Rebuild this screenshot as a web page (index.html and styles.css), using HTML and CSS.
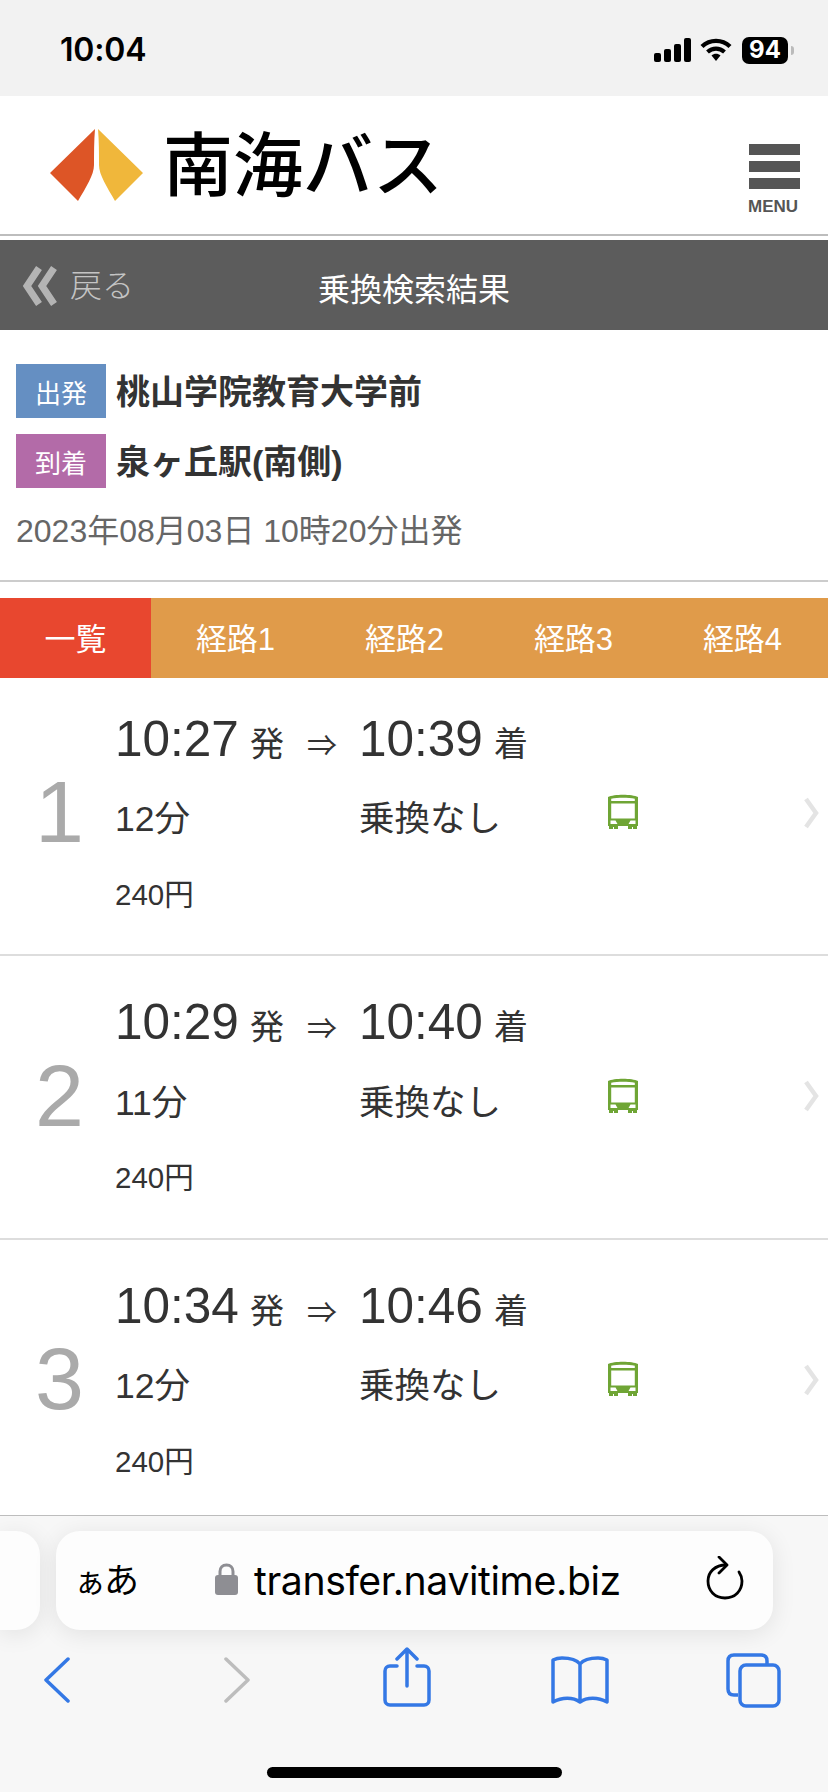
FILE: index.html
```html
<!DOCTYPE html>
<html lang="ja">
<head>
<meta charset="utf-8">
<title>乗換検索結果</title>
<link rel="stylesheet" href="styles.css">
</head>
<body>
<div class="screen">
  <div class="status">
    <span class="clock">10:04</span>
    <div class="status-icons">
      <svg class="signal" width="38" height="24" viewBox="0 0 38 24"><rect x="0" y="15" width="7" height="9" rx="2"/><rect x="10" y="11" width="7" height="13" rx="2"/><rect x="20" y="6" width="7" height="18" rx="2"/><rect x="30" y="0" width="7" height="24" rx="2"/></svg>
      <svg class="wifi" width="32" height="24" viewBox="0 0 32 24"><path d="M2 8.500C10 1 22 1 30 8.500" fill="none" stroke="#000" stroke-width="4.400"/><path d="M7.500 14C12.500 9.600 19.500 9.600 24.500 14" fill="none" stroke="#000" stroke-width="4.200"/><path d="M11.500 17.500C14 15.300 18 15.300 20.500 17.500L16 23Z"/></svg>
      <div class="battery"><span class="battery-num">94</span></div>
      <span class="battery-nub"></span>
    </div>
  </div>

  <header class="site-head">
    <div class="logo">
      <svg class="logo-mark" width="93" height="72" viewBox="0 0 93 72"><path d="M45 0L0 44L28 72C36 58 44 46 44 36C44 24 44 12 45 0Z" fill="#dd5526"/><path d="M48 0L93 44L65 72C57 58 49 46 49 36C49 24 49 12 48 0Z" fill="#f0b73b"/></svg>
      <span class="logo-text">南海バス</span>
    </div>
    <div class="menu">
      <span class="menu-bar"></span><span class="menu-bar"></span><span class="menu-bar"></span>
      <span class="menu-label">MENU</span>
    </div>
  </header>

  <div class="title-bar">
    <div class="back">
      <svg width="35" height="40" viewBox="0 0 35 40"><path d="M17 2L5 20L17 38M32 2L20 20L32 38" fill="none" stroke="#b4b4b4" stroke-width="7"/></svg>
      <span class="back-label">戻る</span>
    </div>
    <h1 class="title">乗換検索結果</h1>
  </div>

  <section class="summary">
    <div class="stop"><span class="badge badge-dep">出発</span><span class="stop-name">桃山学院教育大学前</span></div>
    <div class="stop"><span class="badge badge-arr">到着</span><span class="stop-name">泉ヶ丘駅(南側)</span></div>
    <p class="date">2023年08月03日 10時20分出発</p>
  </section>

  <nav class="tabs">
    <span class="tab tab-active">一覧</span>
    <span class="tab">経路1</span>
    <span class="tab">経路2</span>
    <span class="tab">経路3</span>
    <span class="tab">経路4</span>
  </nav>

  <main class="routes">
    <article class="route">
      <div class="route-num">1</div>
      <div class="route-grid">
        <div class="time"><b>10:27</b><i>発</i><em>⇒</em></div>
        <div class="time time-arr"><b>10:39</b><i>着</i></div>
        <div class="meta">12分</div>
        <div class="meta">乗換なし</div>
        <svg class="bus" width="30" height="35" viewBox="0 0 30 35"><path d="M0 3C6 0 24 0 30 3V32H29V35H25V33H24V35H20V32H10V35H6V33H5V35H1V32H0ZM3.200 4.800V7H26.800V4.800C20 3.500 10 3.500 3.200 4.800ZM3.200 9.500V24.500H26.800V9.500ZM2.500 26.500V30H9.500L7.500 26.500ZM27.500 26.500H22.500L20.500 30H27.500Z" fill="#6fa535" fill-rule="evenodd"/></svg>
        <div class="fare">240円</div>
      </div>
      <svg class="chev" width="16" height="32" viewBox="0 0 16 32"><path d="M3 2L13 16L3 30" fill="none" stroke="#e4e4e4" stroke-width="4.500"/></svg>
    </article>
    <article class="route">
      <div class="route-num">2</div>
      <div class="route-grid">
        <div class="time"><b>10:29</b><i>発</i><em>⇒</em></div>
        <div class="time time-arr"><b>10:40</b><i>着</i></div>
        <div class="meta">11分</div>
        <div class="meta">乗換なし</div>
        <svg class="bus" width="30" height="35" viewBox="0 0 30 35"><path d="M0 3C6 0 24 0 30 3V32H29V35H25V33H24V35H20V32H10V35H6V33H5V35H1V32H0ZM3.200 4.800V7H26.800V4.800C20 3.500 10 3.500 3.200 4.800ZM3.200 9.500V24.500H26.800V9.500ZM2.500 26.500V30H9.500L7.500 26.500ZM27.500 26.500H22.500L20.500 30H27.500Z" fill="#6fa535" fill-rule="evenodd"/></svg>
        <div class="fare">240円</div>
      </div>
      <svg class="chev" width="16" height="32" viewBox="0 0 16 32"><path d="M3 2L13 16L3 30" fill="none" stroke="#e4e4e4" stroke-width="4.500"/></svg>
    </article>
    <article class="route">
      <div class="route-num">3</div>
      <div class="route-grid">
        <div class="time"><b>10:34</b><i>発</i><em>⇒</em></div>
        <div class="time time-arr"><b>10:46</b><i>着</i></div>
        <div class="meta">12分</div>
        <div class="meta">乗換なし</div>
        <svg class="bus" width="30" height="35" viewBox="0 0 30 35"><path d="M0 3C6 0 24 0 30 3V32H29V35H25V33H24V35H20V32H10V35H6V33H5V35H1V32H0ZM3.200 4.800V7H26.800V4.800C20 3.500 10 3.500 3.200 4.800ZM3.200 9.500V24.500H26.800V9.500ZM2.500 26.500V30H9.500L7.500 26.500ZM27.500 26.500H22.500L20.500 30H27.500Z" fill="#6fa535" fill-rule="evenodd"/></svg>
        <div class="fare">240円</div>
      </div>
      <svg class="chev" width="16" height="32" viewBox="0 0 16 32"><path d="M3 2L13 16L3 30" fill="none" stroke="#e4e4e4" stroke-width="4.500"/></svg>
    </article>
  </main>

  <footer class="browser">
    <div class="url-row">
      <div class="prev-card"></div>
      <div class="url-bar">
        <span class="aa"><small>ぁ</small>あ</span>
        <svg class="lock" width="23" height="32" viewBox="0 0 23 32"><path d="M5 14V8.500C5 4.500 7.500 2 11.500 2S18 4.500 18 8.500V14" fill="none" stroke="#8e8e93" stroke-width="3"/><rect x="0" y="12" width="23" height="20" rx="3" fill="#8e8e93"/></svg>
        <span class="url">transfer.navitime.biz</span>
        <svg class="reload" width="38" height="44" viewBox="0 0 38 44"><path d="M20 9C9 9 2 16 2 25C2 35 9 42 19 42C29 42 36 35 36 25C36 22 35 19 33 16" fill="none" stroke="#000" stroke-width="2.800" stroke-linecap="round"/><path d="M13 1L21 9L13 17" fill="none" stroke="#000" stroke-width="2.800" stroke-linecap="round" stroke-linejoin="round"/></svg>
      </div>
    </div>
    <div class="tools">
      <svg width="26" height="46" viewBox="0 0 26 46"><path d="M24 2L2 23L24 44" fill="none" stroke="#3478e5" stroke-width="3.500" stroke-linecap="round" stroke-linejoin="round"/></svg>
      <svg width="26" height="46" viewBox="0 0 26 46"><path d="M2 2L24 23L2 44" fill="none" stroke="#bdbdbd" stroke-width="3.500" stroke-linecap="round" stroke-linejoin="round"/></svg>
      <svg width="48" height="60" viewBox="0 0 48 60"><path d="M14 19H7C4 19 2 21 2 24V53C2 56 4 58 7 58H41C44 58 46 56 46 53V24C46 21 44 19 41 19H34M24 39V3M14 12L24 2L34 12" fill="none" stroke="#3478e5" stroke-width="3.500" stroke-linecap="round" stroke-linejoin="round"/></svg>
      <svg width="58" height="48" viewBox="0 0 58 48"><path d="M29 8C25 3 18 2 11 2C7 2 4 3 2 4V46C11 41 22 41 29 46C36 41 47 41 56 46V4C54 3 51 2 47 2C40 2 33 3 29 8ZM29 8V46" fill="none" stroke="#3478e5" stroke-width="3.500" stroke-linejoin="round"/></svg>
      <svg width="55" height="55" viewBox="0 0 55 55"><path d="M12 42H8C4 42 2 40 2 36V8C2 4 4 2 8 2H35C39 2 41 4 41 8V12" fill="none" stroke="#3478e5" stroke-width="3.500"/><rect x="14" y="12" width="39" height="41" rx="6" fill="none" stroke="#3478e5" stroke-width="3.500"/></svg>
    </div>
    <div class="home"><span class="home-bar"></span></div>
  </footer>
</div>
</body>
</html>
```
FILE: styles.css
```css
* { box-sizing: border-box; }
html, body { margin: 0; padding: 0; }
body {
  background: #fff;
  font-family: "Liberation Sans", "Noto Sans CJK JP", sans-serif;
  color: #333;
}
.screen {
  width: 828px;
  height: 1792px;
  overflow: hidden;
  display: flex;
  flex-direction: column;
}

/* status bar */
.status {
  height: 96px;
  flex: none;
  background: #f2f2f2;
  display: flex;
  align-items: center;
  justify-content: space-between;
  padding: 6px 34px 2px 60px;
}
.clock { font: 600 32px/1 "Inter", "Liberation Sans", sans-serif; color: #000; letter-spacing: -.2px; }
.status-icons { display: flex; align-items: center; }
.signal { margin-right: 8px; }
.wifi { margin-right: 10px; }
.battery {
  width: 46px;
  height: 27px;
  background: #000;
  border-radius: 7px;
  display: flex;
  align-items: center;
  justify-content: center;
}
.battery-num { color: #fff; font: 700 24px/1 "Inter", "Liberation Sans", sans-serif; }
.battery-nub { width: 3px; height: 9px; margin-left: 3px; background: #bbb; border-radius: 0 3px 3px 0; }

/* site header */
.site-head {
  height: 140px;
  flex: none;
  background: #fff;
  border-bottom: 2px solid #bdbdbd;
  display: flex;
  align-items: flex-start;
  justify-content: space-between;
  padding: 33px 28px 0 50px;
}
.logo { display: flex; align-items: center; gap: 20px; }
.logo-text { font: 500 70px/72px "Noto Sans CJK JP", sans-serif; color: #000; margin-top: -8px; }
.menu { width: 51px; display: flex; flex-direction: column; gap: 6px; margin-top: 15px; }
.menu-bar { display: block; height: 11px; background: #555; }
.menu-label { font: 700 17px/18px "Liberation Sans", sans-serif; color: #555; margin-top: 3px; margin-left: -1px; }

/* title bar */
.title-bar {
  margin-top: 4px;
  height: 90px;
  flex: none;
  background: #5c5c5c;
  display: grid;
  grid-template-columns: 1fr auto 1fr;
  align-items: center;
}
.back { display: flex; align-items: center; gap: 13px; margin-top: 2px; padding-left: 22px; }
.back-label { font-size: 32px; line-height: 40px; color: #c4c4c4; font-weight: 300; }
.title { margin: 9px 0 0; font-size: 32px; line-height: 40px; font-weight: 400; color: #fff; }

/* summary */
.summary {
  height: 252px;
  flex: none;
  padding: 34px 16px 0;
  border-bottom: 2px solid #ccc;
  background: #fff;
}
.stop { display: flex; align-items: center; gap: 10px; margin-bottom: 16px; }
.badge {
  width: 90px;
  height: 54px;
  color: #fff;
  font-size: 26px;
  display: flex;
  align-items: center;
  justify-content: center;
}
.badge-dep { background: #658fc2; }
.badge-arr { background: #b36ba8; }
.stop-name { font-size: 34px; line-height: 44px; font-weight: 700; color: #333; padding-top: 1px; }
.date { margin: 0; font-size: 32px; line-height: 40px; color: #666; padding-top: 7px; }

/* tabs */
.tabs {
  margin-top: 16px;
  height: 80px;
  flex: none;
  display: grid;
  grid-template-columns: 151px repeat(4, 169px);
  background: #e09b4a;
}
.tab { display: flex; align-items: center; justify-content: center; color: #fff; font-size: 31px; padding-bottom: 3px; }
.tab-active { background: #e8472f; }

/* routes */
.routes { height: 837px; flex: none; overflow: hidden; }
.route {
  height: 283.500px;
  display: flex;
  align-items: center;
  border-bottom: 2px solid #ddd;
  padding-top: 30px;
  padding-bottom: 28px;
  background: #fff;
}
.route:first-child { height: 278px; padding-top: 24px; }
.route-num {
  width: 115px;
  flex: none;
  padding-left: 35px;
  margin-top: -4px;
  font-size: 88px;
  line-height: 1;
  color: #aaa;
}
.route-grid {
  width: 680px;
  flex: none;
  display: grid;
  grid-template-columns: 244px 248px 1fr;
  grid-template-rows: 60px 65px 50px;
  row-gap: 18px;
  align-items: center;
}
.time { display: flex; align-items: baseline; white-space: nowrap; }
.time b { font-size: 49.500px; font-weight: 400; color: #333; line-height: 60px; }
.time i { font-style: normal; font-size: 34px; margin-left: 11px; }
.time em { font-style: normal; font-size: 30px; margin-left: 23px; }
.time-arr { grid-column: 2 / 4; }
.meta { font-size: 35.500px; line-height: 60px; color: #333; }
.bus { margin-top: -15px; margin-left: 1px; }
.fare { grid-column: 1 / 4; font-size: 29.500px; line-height: 50px; color: #333; }
.chev { flex: none; margin-left: 8px; margin-top: -3px; }

/* browser chrome */
.browser {
  flex: 1;
  background: #f7f7f7;
  border-top: 1px solid #bdbdbd;
  display: flex;
  flex-direction: column;
}
.url-row { display: flex; gap: 16px; padding-top: 15px; height: 115px; flex: none; }
.prev-card { width: 40px; height: 99px; background: #fdfdfd; border-radius: 0 24px 24px 0; box-shadow: 0 4px 24px rgba(0,0,0,.09); }
.url-bar {
  width: 717px;
  height: 99px;
  background: #fdfdfd;
  border-radius: 24px;
  box-shadow: 0 4px 24px rgba(0,0,0,.09);
  display: flex;
  align-items: center;
  padding: 0 29px 0 18px;
  color: #000;
}
.aa { font-size: 35px; line-height: 44px; width: 141px; flex: none; white-space: nowrap; margin-top: 2px; }
.aa small { font-size: 32px; margin-right: -2px; }
.lock { flex: none; margin-top: -3px; }
.url { font: 400 39.200px/48px "Inter", "Liberation Sans", sans-serif; margin-left: 16px; flex: 1; white-space: nowrap; letter-spacing: -.4px; margin-top: 1px; }
.reload { flex: none; margin-top: -5px; }
.tools {
  height: 70px;
  flex: none;
  display: flex;
  align-items: center;
  padding-left: 44px;
  margin-top: 14px;
}
.tools svg:nth-child(2) { margin-left: 154px; }
.tools svg:nth-child(3) { margin-left: 133px; margin-top: -6px; }
.tools svg:nth-child(4) { margin-left: 120px; }
.tools svg:nth-child(5) { margin-left: 117px; }
.home { flex: 1; display: flex; justify-content: center; padding-top: 52px; }
.home-bar { width: 295px; height: 11px; background: #000; border-radius: 6px; }
```
